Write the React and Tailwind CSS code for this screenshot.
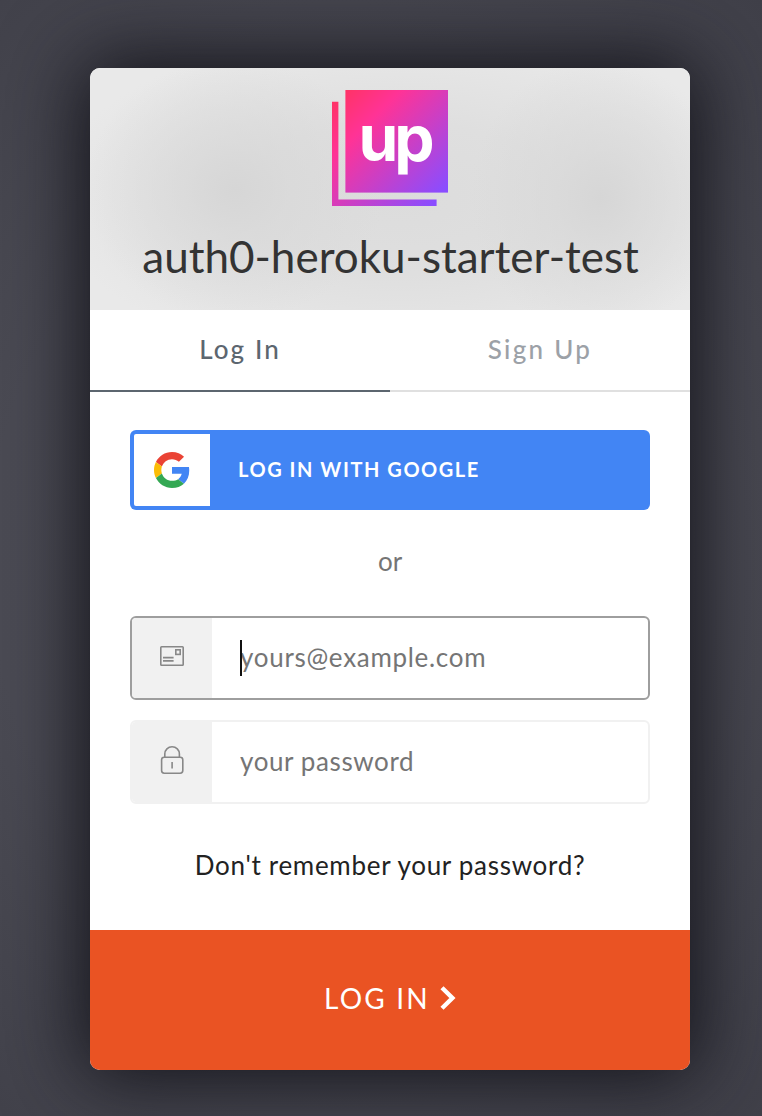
function UpLogo() {
  return (
    <svg className="block h-29 w-29" viewBox="0 0 116 116" role="img" aria-label="up">
      <defs>
        <linearGradient id="mark" x1="0" y1="0" x2="1" y2="1">
          <stop offset="0" stopColor="#ff3366" />
          <stop offset="0.27" stopColor="#ff3396" />
          <stop offset="0.97" stopColor="#8a4dff" />
        </linearGradient>
      </defs>
      <rect x="13.4" y="0" width="102.6" height="102.6" fill="url(#mark)" />
      <path d="M0 11.7H6.4V109.6H104.6V116H0Z" fill="url(#mark)" />
      <text x="26.6" y="70.8" className="fill-white font-['Inter','Liberation_Sans',sans-serif] text-[64px] font-bold tracking-[-4.2px]">
        up
      </text>
    </svg>
  );
}

function GoogleIcon() {
  return (
    <svg className="h-9 w-9" viewBox="0 0 48 48">
      <path fill="#EA4335" d="M24 9.5c3.54 0 6.71 1.22 9.21 3.6l6.85-6.85C35.9 2.38 30.47 0 24 0 14.62 0 6.51 5.38 2.56 13.22l7.98 6.19C12.43 13.72 17.74 9.5 24 9.5z" />
      <path fill="#4285F4" d="M46.98 24.55c0-1.57-.15-3.09-.38-4.55H24v9.02h12.94c-.58 2.96-2.26 5.48-4.78 7.18l7.73 6c4.51-4.18 7.09-10.36 7.09-17.65z" />
      <path fill="#FBBC05" d="M10.53 28.59c-.48-1.45-.76-2.99-.76-4.59s.27-3.14.76-4.59l-7.98-6.19C.92 16.46 0 20.12 0 24c0 3.88.92 7.54 2.56 10.78l7.97-6.19z" />
      <path fill="#34A853" d="M24 48c6.48 0 11.93-2.13 15.89-5.81l-7.73-6c-2.15 1.45-4.92 2.3-8.16 2.3-6.26 0-11.57-4.22-13.47-9.91l-7.98 6.19C6.51 42.62 14.62 48 24 48z" />
    </svg>
  );
}

function MailIcon() {
  return (
    <svg className="h-5 w-6" viewBox="0 0 24 20" fill="none" stroke="#888" strokeWidth="1.6">
      <rect x="0.8" y="0.8" width="22.4" height="18.4" rx="0.8" />
      <rect x="15.8" y="3.8" width="4.4" height="4.6" />
      <path d="M3 11.6H13.6M3 14.9H13.6" />
    </svg>
  );
}

function LockIcon() {
  return (
    <svg className="h-7 w-6" viewBox="0 0 24 28" fill="none" stroke="#888" strokeWidth="1.6">
      <rect x="1.6" y="11.2" width="21.2" height="16" rx="2.6" />
      <path d="M4.8 11V8C4.8 3.8 8 0.8 12.1 0.8S19.4 3.8 19.4 8V11M12.1 16V22.6" />
    </svg>
  );
}

function Field({ icon, focused, type, placeholder, textClass }) {
  return (
    <label
      className={
        "flex h-21 overflow-hidden rounded-md border-2 bg-white " +
        (focused ? "border-[#9e9e9e]" : "border-[#f1f1f1]")
      }
    >
      <span className="flex w-20 shrink-0 justify-center bg-[#f1f1f1]">{icon}</span>
      <span className="relative flex flex-1 items-center pb-0.5 pl-7">
        {focused && <span className="absolute top-[22px] left-7 h-9 w-0.5 bg-[#111]" />}
        <input
          type={type}
          placeholder={placeholder}
          className={"w-full bg-transparent outline-none placeholder:text-[#757575] " + textClass}
        />
      </span>
    </label>
  );
}

export default function App() {
  return (
    <main className="flex h-[1116px] w-[762px] flex-col overflow-hidden bg-[radial-gradient(ellipse_700px_800px_at_340px_558px,#4e4e56_0%,#4b4b54_50%,#3e3e47_100%)] pt-17 pl-[90px] font-['Lato','Open_Sans',sans-serif]">
      <section className="flex h-[1002px] w-150 flex-col overflow-hidden rounded-[10px] bg-white shadow-[0_0_80px_8px_#111118]">
        <header className="flex h-[242px] shrink-0 flex-col items-center bg-[radial-gradient(ellipse_150px_130px_at_145px_122px,#d6d6d6_0%,#d8d8d8b0_35%,#dedede00_100%),radial-gradient(ellipse_130px_140px_at_510px_130px,#d6d6d6_0%,#d8d8d8b0_35%,#dedede00_100%),radial-gradient(ellipse_350px_170px_at_310px_130px,#dcdcdc_0%,#dfdfdf_45%,#e9e9e9_100%)] pt-[22px]">
          <UpLogo />
          <h1 className="mt-[22px] pl-px text-[44px] leading-[56px] whitespace-nowrap text-[#333]">
            auth0-heroku-starter-test
          </h1>
        </header>

        <nav className="grid h-[82px] shrink-0 grid-cols-2 text-center text-[26px] leading-[76px] font-medium">
          <button className="border-b-2 border-[#5c666f] pb-0.5 tracking-[2.1px] text-[#5c666f]">Log In</button>
          <button className="border-b-2 border-[#e0e0e0] pb-0.5 tracking-[2.3px] text-[#9ca1a7]">Sign Up</button>
        </nav>

        <form className="flex flex-1 flex-col px-10 pt-[38px]">
          <button type="button" className="flex h-20 shrink-0 items-center rounded-md bg-[#4285f4] p-1 text-left">
            <span className="flex h-18 w-19 items-center justify-center rounded-l-xs bg-white">
              <GoogleIcon />
            </span>
            <span className="ml-7 pb-[3px] text-[20px] leading-6 font-bold tracking-[1.55px] text-white">LOG IN WITH GOOGLE</span>
          </button>
          <p className="mt-[33px] text-center text-[26px] leading-9 text-[#757575]">or</p>
          <div className="mt-[37px] flex flex-col gap-5">
            <Field
              focused
              type="email"
              placeholder="yours@example.com"
              textClass="text-[26px] tracking-[0.7px]"
              icon={<span className="pt-7"><MailIcon /></span>}
            />
            <Field
              type="password"
              placeholder="your password"
              textClass="text-[26px] tracking-[0.6px]"
              icon={<span className="pt-6"><LockIcon /></span>}
            />
          </div>
          <a className="mt-[43px] text-center text-[26px] leading-9 tracking-[0.7px] text-[#222]">Don't remember your password?</a>
        </form>

        <button className="flex h-[140px] shrink-0 items-center justify-center bg-[#ea5323] pb-1 text-white">
          <span className="text-[28px] leading-9 tracking-[2.2px]">LOG IN</span>
          <svg className="ml-2.5 h-6 w-4" viewBox="0 0 16 24" fill="none" stroke="#fff" strokeWidth="4.4">
            <path d="M2 1.8L12.4 12L2 22.2" />
          </svg>
        </button>
      </section>
    </main>
  );
}
